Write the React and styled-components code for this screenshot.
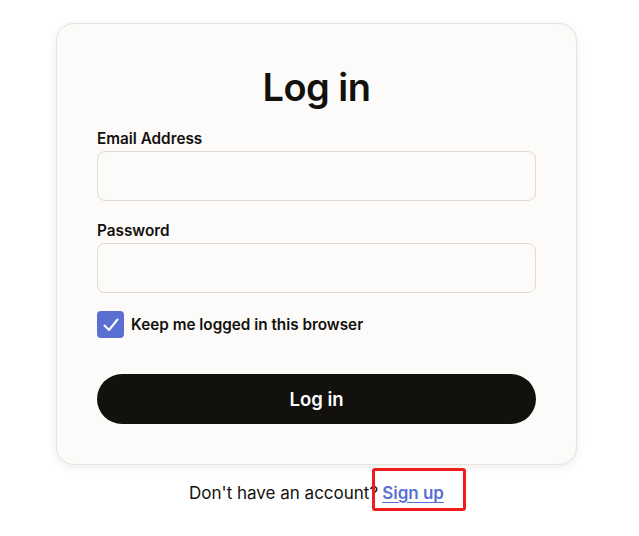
import React from "react";
import styled, { createGlobalStyle } from "styled-components";

const Global = createGlobalStyle`
  body {
    margin: 0;
    background: #ffffff;
    font-family: "Inter", "Lato", sans-serif;
    color: #13110e;
  }
`;

const Page = styled.div`
  display: flex;
  flex-direction: column;
  align-items: center;
  padding: 23px 6px 40px 0;
`;

const Card = styled.div`
  width: 521px;
  box-sizing: border-box;
  padding: 40px 40px 40px;
  background: #fcfbf9;
  border: 1px solid #e6e3dc;
  border-radius: 18px;
  box-shadow: 0 2px 10px rgba(0, 0, 0, 0.08);
`;

const Title = styled.h1`
  margin: 0 0 20px;
  text-align: center;
  font-size: 38px;
  font-weight: 600;
  line-height: 46px;
  letter-spacing: -0.5px;
`;

const Field = styled.div`
  display: flex;
  flex-direction: column;
  gap: 3px;
  margin-bottom: ${(p) => p.$space}px;
`;

const Label = styled.label`
  font-size: 15.3px;
  font-weight: 600;
  line-height: 18px;
`;

const Input = styled.input`
  height: 50px;
  box-sizing: border-box;
  border: 1px solid #dedbd3;
  border-radius: 8px;
  background: #fcfbf9;
  padding: 0 14px;
  font-size: 15px;
  font-family: inherit;
  outline: none;
`;

const CheckRow = styled.label`
  display: flex;
  align-items: center;
  gap: 7px;
  font-size: 15.3px;
  font-weight: 600;
`;

const Box = styled.span`
  width: 27px;
  height: 27px;
  border-radius: 4px;
  background: #5a6fd2;
  display: flex;
  align-items: center;
  justify-content: center;
`;

const Button = styled.button`
  width: 100%;
  height: 50px;
  margin-top: 36px;
  border: none;
  border-radius: 25px;
  background: #13110e;
  color: #ffffff;
  font-family: inherit;
  font-size: 18.5px;
  font-weight: 600;
  cursor: pointer;
`;

const Footer = styled.p`
  margin: 17px 0 0;
  font-size: 17px;
  line-height: 22px;
  display: flex;
  align-items: center;
`;

const Highlight = styled.span`
  display: inline-block;
  border: 3px solid #ee1c1c;
  border-radius: 3px;
  padding: 11px 19px 4px 7px;
  margin: -14px -22px -7px -6px;
`;

const SignUp = styled.a`
  color: #5a6fd2;
  font-weight: 600;
  text-decoration: underline;
  text-underline-offset: 3px;
`;

export default function App() {
  return (
    <>
      <Global />
      <Page>
        <Card>
          <Title>Log in</Title>
          <Field $space={21}>
            <Label>Email Address</Label>
            <Input type="email" />
          </Field>
          <Field $space={18}>
            <Label>Password</Label>
            <Input type="password" />
          </Field>
          <CheckRow>
            <Box>
              <svg width="18" height="18" viewBox="0 0 18 18" fill="none">
                <path
                  d="M2.5 9.5 L7 14 L15.5 3.5"
                  stroke="#ffffff"
                  strokeWidth="2"
                  strokeLinecap="round"
                  strokeLinejoin="round"
                />
              </svg>
            </Box>
            Keep me logged in this browser
          </CheckRow>
          <Button>Log in</Button>
        </Card>
        <Footer>
          Don't have an account?
          <Highlight>
            <SignUp href="#">Sign up</SignUp>
          </Highlight>
        </Footer>
      </Page>
    </>
  );
}
